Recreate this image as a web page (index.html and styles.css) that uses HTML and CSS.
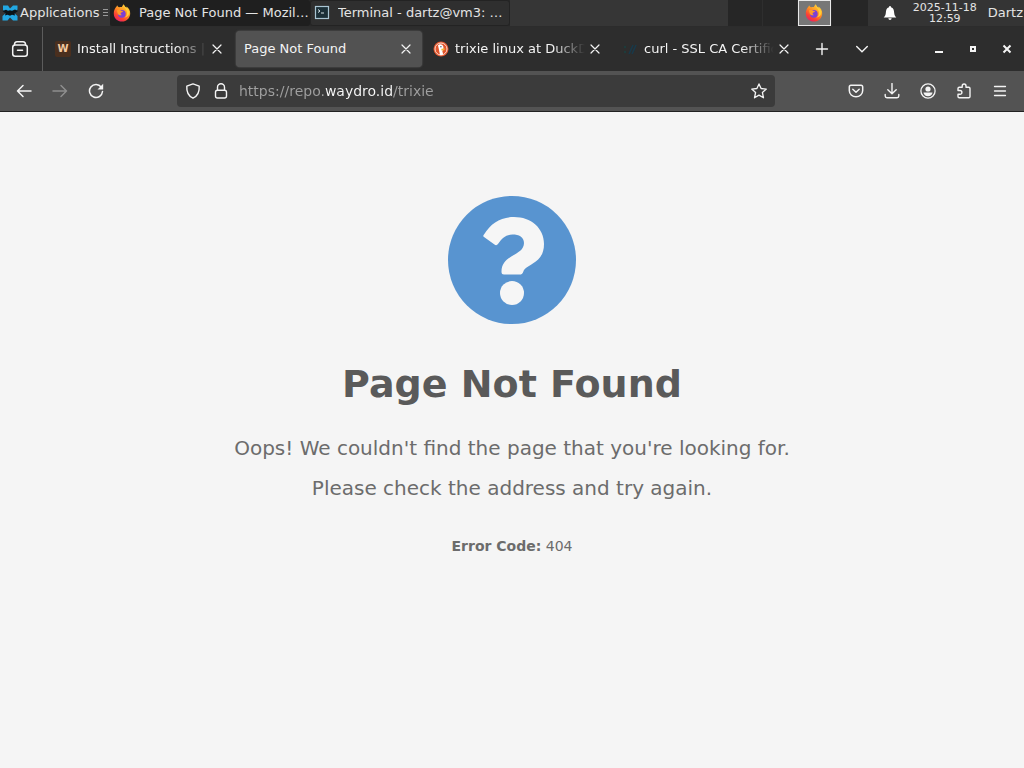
FILE: index.html
```html
<!DOCTYPE html>
<html lang="en">
<head>
<meta charset="utf-8">
<meta name="viewport" content="width=device-width, initial-scale=1">
<title>Page Not Found</title>
<link rel="stylesheet" href="styles.css">
</head>
<body>
<svg class="defs" aria-hidden="true">
  <defs>
    <linearGradient id="flame" x1="0.8" y1="0" x2="0.2" y2="1">
      <stop offset="0" stop-color="#ffdc3c"/>
      <stop offset="0.45" stop-color="#ff8a22"/>
      <stop offset="0.75" stop-color="#fb4034"/>
      <stop offset="1" stop-color="#e31c72"/>
    </linearGradient>
    <symbol id="firefox" viewBox="0 0 18 18">
      <path fill="url(#flame)" d="M2.700 3.600C3.400 3.200 3.800 2 4.200 1.300C4.500 2.300 5.200 3 6.200 3.200C7 2.900 8 2.800 8.900 3C9.300 1.900 10 .8 10.900 .3C11 2 12.200 2.800 13.300 3.900C13.500 3.300 13.400 2.900 13.300 2.500C15.800 4 17.400 6.800 17.200 9.800C17 14.200 13.500 17.600 9 17.600C4.500 17.600 .9 14.200 .8 9.700C.7 7.300 1.600 5.200 2.700 3.600Z"/>
      <circle cx="8.800" cy="9.800" r="3.900" fill="#7b3fd6"/>
      <path fill="#ff9a28" d="M3.800 6.500C5 5.200 7 5.600 8.200 6.700L10 7.200C9.800 8.300 8.300 8.300 7.700 8.900C7.300 9.700 8 10.600 9 10.900C7.700 11.800 5.700 11.300 4.900 9.900Z"/>
      <path fill="#ffcf36" d="M10.900 .6C10.300 3.600 13.900 5 14 8.700C14.100 11 13 12.700 11.200 13.700C14.900 13.200 16.800 10.300 16.300 7.300C15.600 5 12.200 4 10.900 .6Z"/>
    </symbol>
    <symbol id="cross" viewBox="0 0 16 16">
      <path d="M4 4L12 12M12 4L4 12" fill="none" stroke="currentColor" stroke-width="1.200" stroke-linecap="round"/>
    </symbol>
  </defs>
</svg>

<header class="panel">
  <button class="panel-item apps">
    <svg class="i16" viewBox="0 0 16 16"><path fill="#22a7e2" d="M1 .5H6L8 3.500L11 .5H15.500V4.500L12 8L15.500 11V15.500H11L8 12.500L5.500 15.500H.5V11L4 8L1 5Z"/><path fill="#0b1418" d="M.5 6L4 4.700L6 5.700L8 5.200L10 5.700L13 4.500L16 6L12.500 8.500L13 10.500L10 9.700L8 10.700L5.500 9.700L3 10.500L3.500 8.300Z"/></svg>
    <span>Applications</span>
    <svg class="grip" viewBox="0 0 5 10"><path d="M0 1.500H5M0 4.500H5M0 7.500H5" stroke="#999"/></svg>
  </button>
  <button class="panel-item task active">
    <svg class="i18"><use href="#firefox"/></svg>
    <span class="task-name">Page Not Found — Mozilla Firefox</span>
  </button>
  <button class="panel-item task">
    <svg class="i16" viewBox="0 0 16 16"><rect x="1.500" y="1.500" width="13" height="12" fill="#1c3038" stroke="#a9c5d3" stroke-width="1.200"/><path d="M4 4.500L6 6L4 7.500M7 8H10" fill="none" stroke="#d7e4e8"/></svg>
    <span class="task-name">Terminal - dartz@vm3: ~/Downloads</span>
  </button>
  <div class="panel-space"></div>
  <div class="pager">
    <button class="desk" aria-label="Workspace 1"></button>
    <button class="desk" aria-label="Workspace 2"></button>
    <button class="desk current" aria-label="Workspace 3"><svg class="i18"><use href="#firefox"/></svg></button>
    <button class="desk" aria-label="Workspace 4"></button>
  </div>
  <div class="tray">
    <button class="bell" aria-label="Notifications"><svg class="i16" viewBox="0 0 16 16"><path fill="#fff" d="M7 1.500Q8 .5 9 1.500L9 2.200C11.500 3 12 5 12.200 8C12.300 10 13 11 14.300 12.500H1.700C3 11 3.700 10 3.800 8C4 5 4.500 3 7 2.200ZM6.300 13.300H9.700Q9.500 15 8 15Q6.500 15 6.300 13.300Z"/></svg></button>
    <time class="clock"><span>2025-11-18</span><span>12:59</span></time>
    <span class="user">Dartz</span>
  </div>
</header>

<nav class="tabbar">
  <button class="view" aria-label="Firefox View"><svg class="i18" viewBox="0 0 18 18"><path d="M3.500 4.500Q3.500 1.700 6 1.700H12Q14.500 1.700 14.500 4.500M6.500 10.300H11.500" fill="none" stroke="currentColor" stroke-width="1.500" stroke-linecap="round"/><rect x="1.700" y="5" width="14.600" height="11.300" rx="2.500" fill="none" stroke="currentColor" stroke-width="1.500"/></svg></button>
  <div class="tabs">
    <div class="tab">
      <span class="w-icon">W</span>
      <span class="tab-name fade">Install Instructions |</span>
      <button class="close" aria-label="Close tab"><svg class="i16"><use href="#cross"/></svg></button>
    </div>
    <div class="tab selected">
      <span class="tab-name">Page Not Found</span>
      <button class="close" aria-label="Close tab"><svg class="i16"><use href="#cross"/></svg></button>
    </div>
    <div class="tab">
      <svg class="i16" viewBox="0 0 16 16"><circle cx="8" cy="8" r="7.500" fill="#e2552c"/><circle cx="8" cy="8" r="6" fill="none" stroke="#f8d9cd"/><path fill="#fff" d="M5 4.200C6.500 2.700 9.500 3 10.300 5.400C10.800 7 10.200 9 9.300 10L10.200 13.500Q8.500 14.200 7 13.700L5.600 7Z"/><path fill="#f2b632" d="M8.300 7.700L12 7.400L11.200 9.200L8.500 9.500Z"/><circle cx="7.900" cy="5.800" r=".7" fill="#35536b"/></svg>
      <span class="tab-name fade">trixie linux at DuckD</span>
      <button class="close" aria-label="Close tab"><svg class="i16"><use href="#cross"/></svg></button>
    </div>
    <div class="tab">
      <svg class="i16" viewBox="0 0 16 16"><path d="M7 13L11 4M10 13L14 4" stroke="#18394a" stroke-width="1.600"/><circle cx="3" cy="6" r="1.200" fill="#1d3c3c"/><circle cx="3" cy="11" r="1.200" fill="#1d3c3c"/></svg>
      <span class="tab-name fade">curl - SSL CA Certific</span>
      <button class="close" aria-label="Close tab"><svg class="i16"><use href="#cross"/></svg></button>
    </div>
  </div>
  <div class="tab-tools">
    <button class="tool" aria-label="New tab"><svg class="i16" viewBox="0 0 16 16"><path d="M8 2.500V13.500M2.500 8H13.500" stroke="currentColor" stroke-width="1.400" stroke-linecap="round"/></svg></button>
    <button class="tool" aria-label="List all tabs"><svg class="i16" viewBox="0 0 16 16"><path d="M2.700 5.500L8 10.700L13.300 5.500" fill="none" stroke="currentColor" stroke-width="1.400" stroke-linecap="round"/></svg></button>
  </div>
  <div class="window-tools">
    <button class="wtool" aria-label="Minimize"><svg class="i16" viewBox="0 0 16 16"><path d="M4 11H12" stroke="currentColor" stroke-width="2"/></svg></button>
    <button class="wtool" aria-label="Maximize"><svg class="i16" viewBox="0 0 16 16"><rect x="6" y="6" width="4" height="4" fill="none" stroke="currentColor" stroke-width="2"/></svg></button>
    <button class="wtool" aria-label="Close window"><svg class="i16" viewBox="0 0 16 16"><path d="M4.500 4.500L11.500 11.500M11.500 4.500L4.500 11.500" stroke="currentColor" stroke-width="2"/></svg></button>
  </div>
</nav>

<div class="toolbar">
  <div class="history">
    <button class="tool" aria-label="Back"><svg class="i16" viewBox="0 0 16 16"><path d="M15 8H1.500M7 2.500L1.500 8L7 13.500" fill="none" stroke="currentColor" stroke-width="1.500" stroke-linecap="round" stroke-linejoin="round"/></svg></button>
    <button class="tool" aria-label="Forward" disabled><svg class="i16" viewBox="0 0 16 16"><path d="M1 8H14.500M9 2.500L14.500 8L9 13.500" fill="none" stroke="currentColor" stroke-width="1.500" stroke-linecap="round" stroke-linejoin="round"/></svg></button>
    <button class="tool" aria-label="Reload"><svg class="i16" viewBox="0 0 16 16"><path d="M13.300 4.200A6.500 6.500 0 1 0 14.500 8.500" fill="none" stroke="currentColor" stroke-width="1.500" stroke-linecap="round"/><path d="M15.200 .8V6.500H9.500Z" fill="currentColor"/></svg></button>
  </div>
  <div class="urlbar">
    <button class="url-icon" aria-label="Tracking protection"><svg class="i16" viewBox="0 0 16 16"><path d="M8 .9L14.200 3.200C14.600 8.800 12.500 13 8 15.200C3.500 13 1.400 8.800 1.800 3.200Z" fill="none" stroke="currentColor" stroke-width="1.400" stroke-linejoin="round"/></svg></button>
    <button class="url-icon" aria-label="Site information"><svg class="i16" viewBox="0 0 16 16"><path d="M4.500 7V4.300A3.500 3.500 0 0 1 11.500 4.300V7" fill="none" stroke="currentColor" stroke-width="1.400"/><rect x="2.500" y="7.200" width="11" height="7.800" rx="2" fill="none" stroke="currentColor" stroke-width="1.400"/></svg></button>
    <input class="url" type="text" aria-label="Address" value="https://repo.waydro.id/trixie" spellcheck="false">
    <button class="url-icon" aria-label="Bookmark this page"><svg class="i16" viewBox="0 0 16 16"><path d="M8 .9L10.100 5.500L15.300 6.100L11.400 9.500L12.500 14.800L8 12.100L3.500 14.800L4.600 9.500L.7 6.100L5.900 5.500Z" fill="none" stroke="currentColor" stroke-width="1.300" stroke-linejoin="round"/></svg></button>
  </div>
  <div class="actions">
    <button class="tool" aria-label="Save to Pocket"><svg class="i16" viewBox="0 0 16 16"><path d="M3 2.200H13Q14.700 2.200 14.700 4V7.500A6.700 6.300 0 0 1 1.300 7.500V4Q1.300 2.200 3 2.200ZM4.800 6.300L8 9.300L11.200 6.300" fill="none" stroke="currentColor" stroke-width="1.500" stroke-linecap="round" stroke-linejoin="round"/></svg></button>
    <button class="tool" aria-label="Downloads"><svg class="i16" viewBox="0 0 16 16"><path d="M8 .5V10.500M3.800 6.700L8 10.800L12.200 6.700M1.200 11.500V13Q1.200 14.700 3 14.700H13Q14.800 14.700 14.800 13V11.500" fill="none" stroke="currentColor" stroke-width="1.400" stroke-linecap="round" stroke-linejoin="round"/></svg></button>
    <button class="tool" aria-label="Account"><svg class="i16" viewBox="0 0 16 16"><circle cx="8" cy="8" r="7.100" fill="none" stroke="currentColor" stroke-width="1.300"/><circle cx="8" cy="6" r="2.600" fill="currentColor"/><path d="M3.500 9.500H12.500Q12 13.200 8 13.200Q4 13.200 3.500 9.500Z" fill="currentColor"/></svg></button>
    <button class="tool" aria-label="Extensions"><svg class="i16" viewBox="0 0 16 16"><path d="M2 7.500V5.500Q2 4.200 3.300 4.200H6.200V2.900A1.900 1.900 0 0 1 10 2.900V4.200H12.700Q14 4.200 14 5.500V13.500Q14 14.800 12.700 14.800H3.300Q2 14.800 2 13.500V11.300H4A1.900 1.900 0 0 0 4 7.500Z" fill="none" stroke="currentColor" stroke-width="1.400" stroke-linejoin="round"/></svg></button>
    <button class="tool" aria-label="Application menu"><svg class="i16" viewBox="0 0 16 16"><path d="M2.500 3.500H13.500M2.500 8H13.500M2.500 12.500H13.500" stroke="currentColor" stroke-width="1.300" stroke-linecap="round"/></svg></button>
  </div>
</div>

<main class="page">
  <svg class="question" viewBox="0 0 128 128" role="img" aria-label="Question mark">
    <circle cx="64" cy="64" r="64" fill="#5894d0"/>
    <path fill="#f6f6f6" d="M36 38.500C43 27 53 21 66 21C83 21 96 32 96 48C96 66 82 67 76 74C75 76 75 78.500 72 78.500H56Q53.500 78.500 53.500 76C53.500 58 76 60 76 47C76 41 71 38.500 64.500 38.500C58 38.500 54 42 50 48Q48.500 50 46.500 48.500L36 41Q34.500 40 36 38.500Z"/>
    <circle cx="64" cy="97" r="12" fill="#f6f6f6"/>
  </svg>
  <h1>Page Not Found</h1>
  <p class="lead">Oops! We couldn't find the page that you're looking for.</p>
  <p class="lead">Please check the address and try again.</p>
  <p class="code"><strong>Error Code:</strong> 404</p>
</main>
</body>
</html>
```
FILE: styles.css
```css
* {
  box-sizing: border-box;
}

body {
  margin: 0;
  min-height: 100vh;
  display: flex;
  flex-direction: column;
  background: #f5f5f5;
  font-family: "DejaVu Sans", sans-serif;
  font-size: 14px;
}

button {
  display: flex;
  align-items: center;
  justify-content: center;
  flex: none;
  margin: 0;
  padding: 0;
  border: 0;
  background: none;
  color: inherit;
  font: inherit;
}

svg {
  display: block;
  flex: none;
}

.defs {
  position: absolute;
  width: 0;
  height: 0;
}

.i16 {
  width: 16px;
  height: 16px;
}

.i18 {
  width: 18px;
  height: 18px;
}

/* Desktop panel */

.panel {
  display: flex;
  height: 27px;
  background: #282828;
  border-bottom: 1px solid #2c2c2c;
  color: #e4e4e4;
  font-size: 13px;
}

.panel-item {
  justify-content: flex-start;
  padding-bottom: 1px;
}

.apps {
  gap: 2px;
  width: 110px;
  padding-left: 2px;
  background: #363636;
}

.grip {
  width: 5px;
  height: 10px;
  margin-left: 2px;
}

.task {
  flex: 0 1 200px;
  min-width: 0;
  gap: 8px;
  padding: 0 4px 1px 3px;
  background: #2f2f2f;
  border: 1px solid #232323;
  border-radius: 3px;
}

.task.active {
  background: #1f1f1f;
  border: 0;
  padding: 0 0 1px 3px;
}

.task-name {
  overflow: hidden;
  white-space: nowrap;
  text-overflow: ellipsis;
}

.panel-space {
  flex: 1;
  background: #363636;
}

.pager {
  display: flex;
  gap: 1px;
  background: #2e2e2e;
}

.desk {
  width: 34px;
  background: #262626;
}

.desk:last-child {
  width: 36px;
}

.desk.current {
  width: 33px;
  border: 1px solid #e8e8e8;
  background: #777;
}

.tray {
  display: flex;
  align-items: center;
  gap: 15px;
  padding: 0 1px 1px 14px;
  background: #343434;
}

.clock {
  display: flex;
  flex-direction: column;
  align-items: center;
  font-size: 11px;
  line-height: 11px;
}

.user {
  margin-left: -4px;
}

/* Tab strip */

.tabbar {
  display: flex;
  align-items: center;
  height: 44px;
  background: #2d2d2d;
  color: #f4f4f4;
}

.view {
  width: 43px;
  height: 44px;
  padding-right: 2px;
  border-right: 1px solid #5c5c5c;
}

.tabs {
  display: flex;
  flex: 0 1 auto;
  gap: 3px;
  min-width: 0;
  padding-left: 4px;
  font-size: 13px;
}

.tab {
  display: flex;
  flex: 0 1 186px;
  align-items: center;
  gap: 6px;
  width: 186px;
  min-width: 0;
  height: 36px;
  padding: 0 8px;
  border-radius: 4px;
}

.tab.selected {
  background: #525252;
  box-shadow: 0 0 2px #666;
}

.tab-name {
  flex: 1;
  min-width: 0;
  overflow: hidden;
  white-space: nowrap;
  line-height: 20px;
}

.fade {
  margin-right: -4px;
  -webkit-mask-image: linear-gradient(to left, transparent, #000 32px);
  mask-image: linear-gradient(to left, transparent, #000 32px);
}

.w-icon {
  width: 16px;
  height: 16px;
  background: #4a2f1e;
  border-radius: 2px;
  color: #f3c9a0;
  font-size: 10px;
  font-weight: bold;
  line-height: 16px;
  text-align: center;
}

.close {
  width: 16px;
  height: 24px;
}

.tab-tools {
  display: flex;
  gap: 8px;
  padding-left: 6px;
}

.tool {
  width: 32px;
  height: 32px;
}

.tool:disabled {
  color: #8e8e8e;
}

.window-tools {
  display: flex;
  gap: 2px;
  margin-left: auto;
  padding-right: 1px;
}

.wtool {
  width: 32px;
  height: 32px;
}

/* Navigation toolbar */

.toolbar {
  display: flex;
  align-items: center;
  height: 41px;
  padding: 0 8px;
  background: #535353;
  border-bottom: 1px solid #222;
  color: #f4f4f4;
}

.history,
.actions {
  display: flex;
  gap: 4px;
}

.urlbar {
  display: flex;
  flex: 1;
  align-items: center;
  gap: 12px;
  min-width: 0;
  height: 32px;
  margin: 0 65px;
  padding: 0 8px;
  background: #3b3b3b;
  border-radius: 4px;
}

.url {
  flex: 1;
  min-width: 0;
  height: 24px;
  margin-left: -2px;
  padding: 0;
  border: 0;
  outline: 0;
  background: linear-gradient(to right, #a0a0a0 86px, #fafafa 86px, #fafafa 154px, #a0a0a0 154px);
  -webkit-background-clip: text;
  background-clip: text;
  -webkit-text-fill-color: transparent;
  color: #a0a0a0;
  font: inherit;
}

/* Error page */

.page {
  display: flex;
  flex: 1;
  flex-direction: column;
  align-items: center;
  padding: 84px 24px 40px;
  background: #f5f5f5;
  color: #6c6c6c;
  text-align: center;
}

.question {
  width: 128px;
  height: 128px;
}

.page h1 {
  margin: 36px 0 28px;
  color: #5a5a5a;
  font-size: 38px;
  line-height: 48px;
}

.lead {
  margin: 0 0 16px;
  font-size: 20px;
  line-height: 24px;
}

.code {
  margin: 20px 0 0;
  font-size: 14px;
  line-height: 20px;
}
```
